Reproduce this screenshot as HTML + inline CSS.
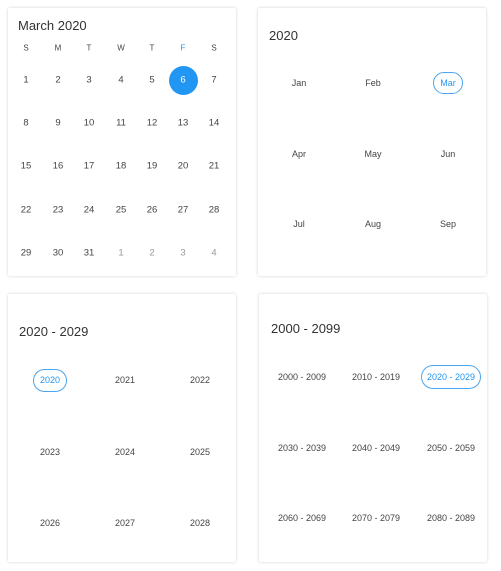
<!DOCTYPE html><html><head><style>
body{margin:0;width:501px;height:571px;background:#fff;font-family:"Liberation Sans",sans-serif;position:relative;overflow:hidden}
.card{position:absolute;width:228px;height:268px;background:#fff;box-shadow:0 0 3px rgba(0,0,0,.18);border-radius:2px}
.t{position:absolute;font-size:13px;color:#333;transform:translate(-50%,-50%);white-space:nowrap}
.s{font-size:9px;color:#444}
.d{font-size:9.5px;color:#444}
.g{color:#999}
.h{position:absolute;font-size:13px;color:#333;white-space:nowrap}
.p{position:absolute;border:1px solid #4aa6f0;border-radius:12px;box-sizing:border-box}
</style></head><body>
<div class="card" style="left:8px;top:8px"></div>
<div class="card" style="left:258px;top:8px"></div>
<div class="card" style="left:8px;top:294px"></div>
<div class="card" style="left:259px;top:294px"></div>
<div class="h" style="left:18px;top:18px">March 2020</div>
<div style="position:absolute;left:169px;top:66px;width:29px;height:29px;border-radius:50%;background:#2196f3"></div>
<div class="p" style="left:433px;top:72px;width:30px;height:22px"></div>
<div class="p" style="left:33px;top:369px;width:34px;height:23px"></div>
<div class="p" style="left:421px;top:365px;width:60px;height:24px"></div>
<div id="c"></div>
<script>
var c=document.getElementById('c'),h='';
function t(x,y,s,cl,st){h+='<div class="t '+(cl||'')+'" style="left:'+x+'px;top:'+y+'px;'+(st||'')+'">'+s+'</div>';}
var X=[26,58,89,121,152,183,214];
'SMTWTFS'.split('').forEach((s,i)=>t(X[i],48,s,'d',i==5?'color:#2196f3;font-size:8px':'font-size:8px'));
var Y=[80,123,166,210,253],n=1;
for(var r=0;r<5;r++)for(var i=0;i<7;i++){var v=n,g='';if(n>31){v=n-31;g=' g';}
t(X[i],Y[r],v,'d'+g,n==6?'color:#fff':'');n++;}
h+='<div class="h" style="left:269px;top:28px">2020</div>';
var M='Jan Feb Mar Apr May Jun Jul Aug Sep'.split(' '),MX=[299,373,448],MY=[83,154,224];
M.forEach((m,i)=>t(MX[i%3],MY[Math.floor(i/3)],m,'s',i==2?'color:#2196f3':''));
h+='<div class="h" style="left:19px;top:324px">2020 - 2029</div>';
var YX=[50,125,200],YY=[380,452,523];
for(var i=0;i<9;i++)t(YX[i%3],YY[Math.floor(i/3)],2020+i,'s',i==0?'color:#2196f3':'');
h+='<div class="h" style="left:271px;top:321px">2000 - 2099</div>';
var DX=[302,376,451],DY=[377,448,518];
for(var i=0;i<9;i++){var a=2000+i*10;t(DX[i%3],DY[Math.floor(i/3)],a+' - '+(a+9),'s',i==2?'color:#2196f3':'');}
c.innerHTML=h;
</script>
</body></html>
